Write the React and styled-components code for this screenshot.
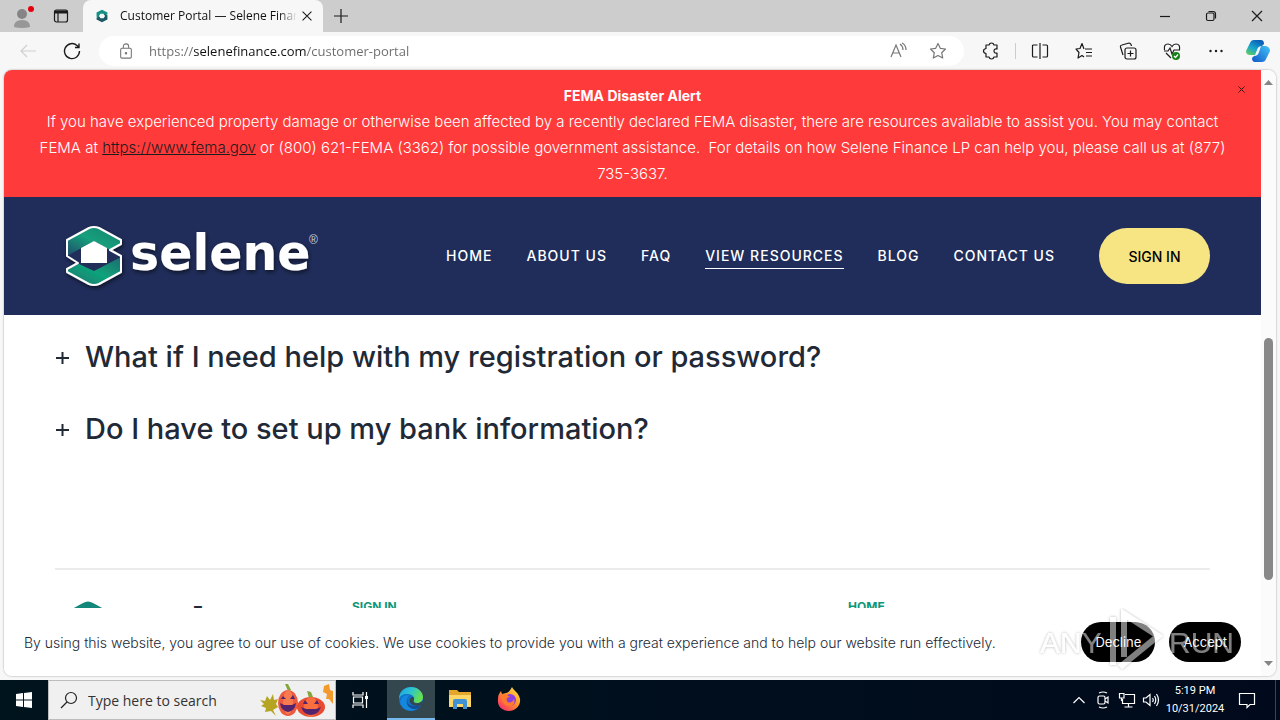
import styled, { createGlobalStyle } from 'styled-components'

const GlobalStyle = createGlobalStyle`
    * {
        box-sizing: border-box;
    }

    body {
        margin: 0;
        font-family: 'Inter', sans-serif;
    }

    button {
        border: none;
        background: none;
        padding: 0;
        font-family: inherit;
        color: inherit;
    }

    p {
        margin: 0;
    }
`

const ui = "'Open Sans', 'Noto Sans', sans-serif"

const Desktop = styled.div`
    display: flex;
    flex-direction: column;
    height: 100vh;
    overflow: hidden;
    background: #f7f7f7;
`

/* Browser */

const TitleBar = styled.div`
    display: flex;
    flex: none;
    height: 32px;
    background: #cdcdcd;
    font-family: ${ui};
`

const IconButton = styled.button`
    flex: none;
    display: flex;
    align-items: center;
    justify-content: center;
    width: ${({ $width }) => $width || 44}px;
    color: ${({ $color }) => $color || '#1b1b1b'};
`

const Tab = styled.div`
    display: flex;
    align-items: center;
    width: 240px;
    margin-left: 6px;
    padding: 0 6px 0 12px;
    background: #f7f7f7;
    border-radius: 8px 8px 0 0;
`

const TabTitle = styled.span`
    flex: 1;
    margin-left: 11px;
    overflow: hidden;
    white-space: nowrap;
    font-size: 12px;
    line-height: 16px;
    color: #111;
    mask-image: linear-gradient(to right, #000 90%, transparent);
`

const WindowButtons = styled.div`
    display: flex;
    margin-left: auto;
`

const Toolbar = styled.div`
    display: flex;
    align-items: center;
    flex: none;
    height: 38px;
    padding: 0 2px 0 6px;
`

const Address = styled.form`
    display: flex;
    align-items: center;
    flex: 1;
    height: 30px;
    margin: 0 5px;
    padding: 0 6px 0 19px;
    background: #fff;
    border-radius: 15px;
    color: #767676;
`

/* the host is darker than the rest of the address */
const Url = styled.input`
    flex: 1;
    margin-left: 15px;
    padding: 0;
    border: none;
    outline: none;
    font-family: ${ui};
    font-size: 13px;
    color: transparent;
    background: linear-gradient(to right, #6b6b6b 45px, #111 45px, #111 157px, #6b6b6b 157px);
    background-clip: text;
`

const Separator = styled.div`
    width: 1px;
    height: 16px;
    margin: 0 2px;
    background: #ccc;
`

const Viewport = styled.div`
    position: relative;
    display: flex;
    flex: 1;
    min-height: 0;
    margin: 0 4px 4px;
    overflow: hidden;
    background: #fff;
    border-radius: 8px;
    box-shadow: 0 0 2px rgba(0, 0, 0, 0.4);
`

const Page = styled.div`
    position: relative;
    flex: 1;
    min-width: 0;
    overflow: hidden;
`

const Scrollbar = styled.div`
    display: flex;
    flex-direction: column;
    align-items: center;
    width: 15px;
    padding: 10px 0;
    background: #fbfbfb;
`

const Space = styled.div`
    flex: ${({ $grow }) => $grow};
`

const Thumb = styled.div`
    flex: 242;
    width: 9px;
    background: #888;
    border-radius: 5px;
`

/* Website */

const Alert = styled.section`
    position: relative;
    padding: 13px 30px 10px;
    background: #ff3a3b;
    color: #fff;
    text-align: center;
    font-size: 15px;
    line-height: 26px;
    font-weight: 300;
`

const AlertTitle = styled.p`
    font-size: 14px;
    font-weight: 700;
`

const AlertLink = styled.a`
    color: #1d1d1d;
`

const AlertClose = styled.button`
    position: absolute;
    top: 15px;
    right: 15px;
    display: flex;
    color: #3a0c0c;
`

const Header = styled.header`
    display: flex;
    align-items: center;
    height: 118px;
    padding: 0 51px;
    background: #202d5a;
    color: #fff;
`

const Nav = styled.nav`
    display: flex;
    gap: 34px;
    margin-left: auto;
    margin-right: 44px;
`

const NavLink = styled.a`
    padding: 2px 0 1px;
    border-bottom: 1px solid ${({ $active }) => ($active ? '#fff' : 'transparent')};
    color: #fff;
    text-decoration: none;
    white-space: nowrap;
    font-size: 14px;
    line-height: 22px;
    font-weight: 500;
    letter-spacing: 1px;
`

const SignIn = styled.button`
    width: 111px;
    height: 56px;
    border-radius: 28px;
    background: #f7e584;
    color: #000;
    font-size: 14px;
    font-weight: 500;
`

const Faq = styled.main`
    padding: 5px 51px 104px;
`

const Question = styled.button`
    display: flex;
    align-items: center;
    gap: 15px;
    width: 100%;
    height: 72px;
    color: #222936;
    text-align: left;
    font-size: 29px;
    font-weight: 500;
`

const Footer = styled.footer`
    display: grid;
    grid-template-columns: 297px 496px 1fr;
    margin: 0 51px;
    padding-top: 29px;
    border-top: 2px solid #ebebeb;
`

const FooterLink = styled.a`
    color: #0d9678;
    text-decoration: none;
    font-size: 12px;
    line-height: 16px;
    font-weight: 700;
`

const Cookies = styled.section`
    position: absolute;
    left: 0;
    right: 0;
    bottom: 0;
    display: flex;
    align-items: center;
    gap: 14px;
    height: 68px;
    padding: 0 20px;
    background: #fff;
    color: #222936;
    font-size: 14px;
    font-weight: 300;
`

const CookieText = styled.p`
    flex: 1;
`

const CookieButton = styled.button`
    height: 40px;
    padding: 0 14px;
    border-radius: 20px;
    background: #000;
    color: #fff;
    font-size: 13px;
`

const Watermark = styled.svg`
    position: absolute;
    right: 40px;
    bottom: 2px;
    pointer-events: none;
`

/* Taskbar */

const Taskbar = styled.div`
    display: flex;
    flex: none;
    height: 40px;
    padding-right: 4px;
    background: linear-gradient(to right, #00141d, #000a1c);
    color: #fff;
    font-family: ${ui};
`

const Search = styled.label`
    display: flex;
    align-items: center;
    width: 288px;
    padding: 0 2px 0 11px;
    background: #f0f0f0;
    border: 1px solid #bdbdbd;
`

const SearchInput = styled.input`
    flex: 1;
    min-width: 0;
    margin-left: 10px;
    padding: 0;
    border: none;
    outline: none;
    background: none;
    font-family: ${ui};
    font-size: 14px;

    &::placeholder {
        color: #333;
    }
`

const Apps = styled.div`
    display: flex;
    margin-left: 3px;
`

const AppButton = styled.button`
    display: flex;
    align-items: center;
    justify-content: center;
    width: 48px;
    margin-right: 1px;
    background: ${({ $active }) => ($active ? '#34464e' : 'none')};
    border-bottom: 2px solid ${({ $active }) => ($active ? '#76b9ed' : 'transparent')};
`

const Tray = styled.div`
    display: flex;
    margin-left: auto;
    padding-right: 8px;
    border-right: 1px solid #3b4450;
`

const Clock = styled.div`
    width: 64px;
    padding-top: 2px;
    text-align: center;
    font-family: 'Roboto', sans-serif;
    font-size: 11px;
    line-height: 18px;
`

const Svg = ({ size = 18, children, ...rest }) => (
    <svg width={size} height={size} viewBox="0 0 18 18" fill="none" stroke="currentColor" strokeWidth="1.2" {...rest}>
        {children}
    </svg>
)

const Favicon = () => (
    <Svg size={14} stroke="none">
        <path d="M9 1 L16 4.5 V7 L12.500 8 L11 6 H7 L5 9 L7 12 L2 10 V4.500Z" fill="#159084" />
        <path d="M9 17 L2 13.500 V11 L5.500 10 L7 12 H11 L13 9 L11 6 L16 8 V13.500Z" fill="#1c5966" />
    </Svg>
)

const mark = 'M34 9 Q39 7 44 9 L66 21 V25 L55 31 L66 37 V53 L44 65 Q39 67 34 65 L12 53 V50 L23 44 L12 37 V21Z'

const Logo = () => (
    <svg width="270" height="74" viewBox="0 0 270 74" role="img" aria-label="Selene">
        <defs>
            <linearGradient id="top" x1="0" y1="1" x2="1" y2="0">
                <stop offset="0.1" stopColor="#1d5a6c" />
                <stop offset="0.5" stopColor="#17a07c" />
                <stop offset="1" stopColor="#17806f" />
            </linearGradient>
            <linearGradient id="bottom" x1="0" y1="1" x2="1" y2="0">
                <stop offset="0" stopColor="#17706f" />
                <stop offset="0.5" stopColor="#10a37b" />
                <stop offset="1" stopColor="#1d6a6c" />
            </linearGradient>
            <filter id="shadow" x="-10%" y="-10%" width="120%" height="130%">
                <feDropShadow dx="1" dy="2" stdDeviation="2" floodColor="#000" floodOpacity="0.6" />
            </filter>
        </defs>
        <g filter="url(#shadow)">
            <path d={mark} fill="#202d5a" />
            <path d="M34 9 Q39 7 44 9 L66 21 V25 L55 31 L39 22 L12 37 V21Z" fill="url(#top)" />
            <path d="M12 51 L24 45 L39 52 L66 38 V53 L44 65 Q39 67 34 65 L12 53Z" fill="url(#bottom)" />
            <path d="M39 22 L52 29 V44 H26 V29Z" fill="#fff" />
            <path d={mark} fill="none" stroke="#fff" strokeWidth="2" strokeLinejoin="round" />
            <text x="75" y="51" fill="#fff" fontFamily="DejaVu Sans" fontWeight="700" fontSize="49">
                selene
            </text>
        </g>
        <text x="254" y="25" fill="#c9cddb" fontFamily="Liberation Sans" fontSize="12">
            ®
        </text>
    </svg>
)

const FooterLogo = () => (
    <svg width="270" height="74" viewBox="0 0 270 74" aria-hidden="true">
        <path d="M28 4 Q33 1 38 4 L60 16 V21 L33 33 L6 21 V16Z" fill="#12877a" />
        <text x="78" y="41" fill="#222936" fontFamily="DejaVu Sans" fontWeight="700" fontSize="45">
            selene
        </text>
    </svg>
)

const Pumpkins = () => (
    <svg width="74" height="36" viewBox="0 0 74 36">
        <path d="M1 18 L6 19 L8 14 L11 18 L14 12 L15 18 L19 17 L17 22 L19 25 L14 28 L17 34 L12 29 L6 30 L7 26 L2 24 L5 22Z" fill="#b5a421" />
        <path d="M65 4 L70 2 L71 8 L74 9 V22 L70 17 L67 17 L68 12 L64 10Z" fill="#f39a2d" />
        <path d="M29 9 L26 2 L29 2 L32 8Z" fill="#84a53a" />
        <ellipse cx="29" cy="21" rx="10" ry="13" fill="#ed5b3e" />
        <ellipse cx="29" cy="20" rx="5" ry="12" fill="#f87b50" />
        <path d="M22 17 L24 14 L27 17Z M31 17 L34 13 L36 17Z" fill="#53246d" />
        <path d="M21 21 L25 23 H33 L37 21 Q36 29 29 30 Q22 29 21 21Z" fill="#53246d" />
        <path d="M50 16 L48 9 L52 10 L54 15Z" fill="#84a53a" />
        <ellipse cx="52" cy="25" rx="14" ry="10" fill="#e94b32" />
        <ellipse cx="52" cy="25" rx="7" ry="10" fill="#f9703e" />
        <path d="M44 22 L46 18 L49 22Z M55 22 L58 18 L60 22Z" fill="#53246d" />
        <path d="M42 25 L47 27 H57 L62 25 Q59 33 52 33 Q45 33 42 25Z" fill="#53246d" />
    </svg>
)

const EdgeIcon = () => (
    <svg width="24" height="24" viewBox="0 0 24 24">
        <defs>
            <linearGradient id="edge" x1="0" y1="0" x2="1" y2="0.4">
                <stop offset="0" stopColor="#1f9fe0" />
                <stop offset="0.5" stopColor="#2bc3d2" />
                <stop offset="1" stopColor="#66e04f" />
            </linearGradient>
        </defs>
        <circle cx="12" cy="12" r="12" fill="#1071c9" />
        <path d="M0 12 C0 4 6 0 12 0 C19 0 24 5 24 10 C24 14 21 16 18 16 C15 16 14 15 15 13 C16 9 12 7 8 7 C4 7 1 9 0 12Z" fill="url(#edge)" />
        <path d="M8 12 C6 17 10 22 17 22 C13 25 5 24 2 18 C0 14 3 8 9 8 C11 8 9 9 8 12Z" fill="#1588de" />
        <path d="M9 11 C6 17 12 21 22 18 C20 21 18 22 16 22 C9 22 6 16 9 11Z" fill="#134f96" />
        <path d="M15 12 C13 15 16 17 20 16 L24 14 L23 18 C15 20 9 17 11 12 C12 10 15 9 15 12Z" fill="#34464e" />
    </svg>
)

const FolderIcon = () => (
    <svg width="22" height="20" viewBox="0 0 22 20">
        <path d="M0 1 H8 L10 3 H22 V18 H0Z" fill="#e5a62c" />
        <path d="M0 6 H22 V18 H0Z" fill="#fcd667" />
        <path d="M4 20 V12 Q4 10 6 10 H16 Q18 10 18 12 V20 H14 V15 H8 V20Z" fill="#3f92d3" />
    </svg>
)

const FirefoxIcon = () => (
    <svg width="24" height="24" viewBox="0 0 24 24">
        <defs>
            <linearGradient id="fire" x1="1" y1="0" x2="0.2" y2="1">
                <stop offset="0" stopColor="#fff04a" />
                <stop offset="0.5" stopColor="#ff9328" />
                <stop offset="1" stopColor="#f7306a" />
            </linearGradient>
        </defs>
        <path d="M15 0 C17 4 22 6 23 12 C24 19 18 24 12 24 C5 24 0 19 1 12 C1 8 2 7 4 4 L5 7 L9 6 C11 6 13 4 15 0Z" fill="url(#fire)" />
        <circle cx="13" cy="13" r="6" fill="#8b3fe0" />
        <path d="M4 8 C8 6 11 8 13 10 C10 10 9 12 10 14 C12 17 16 15 17 12 C19 18 14 20 11 19 C7 18 4 14 4 8Z" fill="#ff7b2c" />
    </svg>
)

const Copilot = () => (
    <svg width="24" height="24" viewBox="0 0 24 24">
        <defs>
            <linearGradient id="copA" x1="0" y1="1" x2="0.6" y2="0">
                <stop offset="0" stopColor="#6fd34a" />
                <stop offset="0.5" stopColor="#18a6cf" />
                <stop offset="1" stopColor="#0b61b8" />
            </linearGradient>
            <linearGradient id="copB" x1="0" y1="1" x2="1" y2="0">
                <stop offset="0" stopColor="#1157c9" />
                <stop offset="1" stopColor="#42c5f7" />
            </linearGradient>
        </defs>
        <path d="M8 1 H15 Q18 1 18 5 L16 7 Q12 7 11 11 L9 16 H4 Q0 16 0 12 L4 4 Q5 1 8 1Z" fill="url(#copA)" />
        <path d="M16 23 H9 Q6 23 6 19 L8 17 Q12 17 13 13 L15 7 H20 Q24 8 24 12 L20 20 Q19 23 16 23Z" fill="url(#copB)" />
    </svg>
)

const Chrome = () => (
    <>
        <TitleBar>
            <IconButton aria-label="Profile">
                <svg width="24" height="26" viewBox="0 0 24 26">
                    <circle cx="12" cy="11" r="5" fill="#858585" />
                    <path d="M4 24 Q4 17 12 17 Q20 17 20 24 Q12 26 4 24Z" fill="#979797" />
                    <circle cx="21" cy="6" r="3" fill="#e3000f" />
                </svg>
            </IconButton>
            <IconButton $width={33} aria-label="Tab actions">
                <Svg size={18}>
                    <rect x="2.500" y="3" width="13" height="12" rx="2" />
                    <path d="M2.500 5 H15.500" strokeWidth="3" />
                    <path d="M6 6 V15" />
                </Svg>
            </IconButton>
            <Tab>
                <Favicon />
                <TabTitle>Customer Portal — Selene Finance</TabTitle>
                <IconButton $width={20} aria-label="Close tab">
                    <Svg size={16}>
                        <path d="M4 4 L14 14 M14 4 L4 14" />
                    </Svg>
                </IconButton>
            </Tab>
            <IconButton $width={36} aria-label="New tab">
                <Svg>
                    <path d="M9 2 V16 M2 9 H16" />
                </Svg>
            </IconButton>
            <WindowButtons>
                <IconButton $width={46} aria-label="Minimize">
                    <Svg>
                        <path d="M4 9.500 H14" />
                    </Svg>
                </IconButton>
                <IconButton $width={46} aria-label="Restore">
                    <Svg>
                        <rect x="4.500" y="6" width="7.500" height="7.500" rx="1.500" />
                        <path d="M6.500 4.500 H11 Q13.500 4.500 13.500 7 V11.500" />
                    </Svg>
                </IconButton>
                <IconButton $width={46} aria-label="Close">
                    <Svg>
                        <path d="M4 4 L14 14 M14 4 L4 14" />
                    </Svg>
                </IconButton>
            </WindowButtons>
        </TitleBar>

        <Toolbar>
            <IconButton $color="#cfcfcf" aria-label="Back">
                <Svg>
                    <path d="M17 9 H2 M8 3 L2 9 L8 15" />
                </Svg>
            </IconButton>
            <IconButton aria-label="Refresh">
                <Svg strokeWidth="1.400">
                    <path d="M16.500 9 A7.500 7.500 0 1 1 14 3.500 L16 5.500 M16 1.500 V5.500 H12" />
                </Svg>
            </IconButton>
            <Address>
                <Svg size={16}>
                    <rect x="3" y="6" width="12" height="11" rx="1.500" />
                    <path d="M6 6 V4 Q6 1 9 1 Q12 1 12 4 V6" />
                    <circle cx="9" cy="11.500" r="0.800" fill="currentColor" />
                </Svg>
                <Url type="text" aria-label="Address" defaultValue="https://selenefinance.com/customer-portal" />
                <IconButton type="button" $width={40} $color="#767676" aria-label="Read aloud">
                    <Svg>
                        <path d="M2 15 L7 3 L12 15 M4 11 H10 M11 2 Q14 4 14 8 M13 1 Q17 3 17 8" />
                    </Svg>
                </IconButton>
                <IconButton type="button" $width={40} $color="#767676" aria-label="Favorite">
                    <Svg>
                        <path d="M9 1.500 L11.300 6.300 L16.500 7 L12.700 10.700 L13.700 16 L9 13.500 L4.300 16 L5.300 10.700 L1.500 7 L6.700 6.300Z" strokeLinejoin="round" />
                    </Svg>
                </IconButton>
            </Address>
            <IconButton aria-label="Extensions">
                <Svg>
                    <path d="M4 3 H7 Q7.500 1 9.500 1 Q11.500 1 12 3 H15 V7 Q12 6.500 12 9 Q12 11.500 15 11 V15 H12 Q11.500 17 9.500 17 Q7.500 17 7 15 H4 V11.500 Q1.500 11 1.500 9 Q1.500 7 4 6.500Z" strokeLinejoin="round" />
                </Svg>
            </IconButton>
            <Separator />
            <IconButton aria-label="Split screen">
                <Svg>
                    <path d="M6.500 3 H2.500 Q1.500 3 1.500 4 V14 Q1.500 15 2.500 15 H6.500 M11.500 3 H15.500 Q16.500 3 16.500 4 V14 Q16.500 15 15.500 15 H11.500 M9 1 V17" />
                </Svg>
            </IconButton>
            <IconButton aria-label="Favorites">
                <Svg>
                    <path d="M9 7 L7 1.500 L5 6.500 L1 7 L4 10.500 L3 16 L7 13.500 L9 15 M10 7 H17 M11 10.500 H17 M11 14 H17" strokeLinejoin="round" />
                </Svg>
            </IconButton>
            <IconButton aria-label="Collections">
                <Svg>
                    <rect x="6" y="6" width="11" height="11" rx="2" />
                    <path d="M11.500 8.500 V14.500 M8.500 11.500 H14.500 M4 13 L1.500 5 Q1 3.500 3 3 L10 1 Q12 1 12.500 4" />
                </Svg>
            </IconButton>
            <IconButton aria-label="Browser essentials">
                <Svg>
                    <path d="M1.500 8 Q0.500 2 5 2 Q7.500 2 9 4.500 Q10.500 2 13 2 Q17.500 2 16.500 8 M1 9 H5 L7 6 L9 12 L11 8 H17 M3 11 L8 16" />
                    <circle cx="13" cy="14" r="4" fill="#168018" stroke="none" />
                    <path d="M11 14 L12.500 15.500 L15 12.500" stroke="#fff" />
                </Svg>
            </IconButton>
            <IconButton aria-label="Settings and more">
                <Svg fill="currentColor" stroke="none">
                    <circle cx="3.500" cy="9" r="1.200" />
                    <circle cx="9" cy="9" r="1.200" />
                    <circle cx="14.500" cy="9" r="1.200" />
                </Svg>
            </IconButton>
            <IconButton $width={40} aria-label="Copilot">
                <Copilot />
            </IconButton>
        </Toolbar>
    </>
)

const links = ['HOME', 'ABOUT US', 'FAQ', 'VIEW RESOURCES', 'BLOG', 'CONTACT US']

const questions = ['What if I need help with my registration or password?', 'Do I have to set up my bank information?']

const Website = () => (
    <Page>
        <Alert>
            <AlertTitle>FEMA Disaster Alert</AlertTitle>
            <p>
                If you have experienced property damage or otherwise been affected by a recently declared FEMA disaster, there are resources
                available to assist you. You may contact FEMA at <AlertLink href="https://www.fema.gov">https://www.fema.gov</AlertLink> or
                (800) 621-FEMA (3362) for possible government assistance.&nbsp; For details on how Selene Finance LP can help you, please
                call us at (877) 735-3637.
            </p>
            <AlertClose aria-label="Close alert">
                <Svg size={9}>
                    <path d="M3 3 L15 15 M15 3 L3 15" strokeWidth="2" />
                </Svg>
            </AlertClose>
        </Alert>

        <Header>
            <Logo />
            <Nav>
                {links.map((link) => (
                    <NavLink key={link} href="#" $active={link === 'VIEW RESOURCES'}>
                        {link}
                    </NavLink>
                ))}
            </Nav>
            <SignIn>SIGN IN</SignIn>
        </Header>

        <Faq>
            {questions.map((question) => (
                <Question key={question}>
                    <Svg size={15} viewBox="0 0 15 15">
                        <path d="M7.500 3 V15 M1 9 H14" strokeWidth="2" />
                    </Svg>
                    {question}
                </Question>
            ))}
        </Faq>

        <Footer>
            <FooterLogo />
            <FooterLink href="#">SIGN IN</FooterLink>
            <FooterLink href="#">HOME</FooterLink>
        </Footer>

        <Cookies>
            <CookieText>
                By using this website, you agree to our use of cookies. We use cookies to provide you with a great experience and to help our
                website run effectively.
            </CookieText>
            <CookieButton>Decline</CookieButton>
            <CookieButton>Accept</CookieButton>
        </Cookies>
    </Page>
)

const AnyRun = () => (
    <Watermark width="200" height="66" viewBox="0 0 200 66">
        <defs>
            <filter id="glow" x="-10%" y="-10%" width="120%" height="120%">
                <feDropShadow dx="0" dy="0" stdDeviation="1.5" floodColor="#000" floodOpacity="0.6" />
            </filter>
        </defs>
        <g filter="url(#glow)" opacity="0.5" fill="#fff" fontFamily="Liberation Sans" fontSize="30">
            <text x="4" y="45">
                ANY
            </text>
            <path d="M77 9 V57 M88 49 V6 L122 28 L84 59" fill="none" stroke="#fff" strokeWidth="6" />
            <text x="133" y="45">
                RUN
            </text>
        </g>
    </Watermark>
)

const WindowsTaskbar = () => (
    <Taskbar>
        <IconButton $width={48} $color="#fff" aria-label="Start">
            <svg width="16" height="16" viewBox="0 0 16 16" fill="#fff">
                <path d="M0 2 L7 1 V7.500 H0Z M8 1 L16 0 V7.500 H8Z M0 8.500 H7 V15 L0 14Z M8 8.500 H16 V16 L8 15Z" />
            </svg>
        </IconButton>
        <Search>
            <Svg stroke="#222">
                <circle cx="11" cy="7" r="5.500" />
                <path d="M7 11 L1 17" />
            </Svg>
            <SearchInput type="text" placeholder="Type here to search" aria-label="Type here to search" />
            <Pumpkins />
        </Search>
        <IconButton $width={48} $color="#fff" aria-label="Task view">
            <Svg>
                <path d="M2 1 V4 H12 V1 M2 17 V14 H12 V17 M2.500 6 H11.500 V12 H2.500Z M15.500 1 V17" />
                <path d="M15.500 5 V8" strokeWidth="3" />
            </Svg>
        </IconButton>
        <Apps>
            <AppButton $active aria-label="Microsoft Edge">
                <EdgeIcon />
            </AppButton>
            <AppButton aria-label="File Explorer">
                <FolderIcon />
            </AppButton>
            <AppButton aria-label="Firefox">
                <FirefoxIcon />
            </AppButton>
        </Apps>
        <Tray>
            <IconButton $width={24} $color="#fff" aria-label="Show hidden icons">
                <Svg>
                    <path d="M3.500 12 L9 6.500 L14.500 12" />
                </Svg>
            </IconButton>
            <IconButton $width={24} $color="#fff" aria-label="Camera">
                <Svg>
                    <rect x="4" y="5" width="7" height="8" rx="1.500" />
                    <path d="M11 8 L14 6 V12 L11 10 M5 2 Q9 0 13 2 M5 16 Q9 18 13 16" />
                </Svg>
            </IconButton>
            <IconButton $width={24} $color="#fff" aria-label="Network">
                <Svg>
                    <path d="M7 3.500 H16.500 V12.500 H4.500 V8 M10.500 12.500 V16 M6.500 16 H14.500 M1.500 2.500 H6 V7 H1.500Z M3.500 7 V10" />
                </Svg>
            </IconButton>
            <IconButton $width={24} $color="#fff" aria-label="Volume">
                <Svg>
                    <path d="M1.500 7 H4 L8 3.500 V14.500 L4 11 H1.500Z M10.500 7 Q12 9 10.500 11 M12.500 5 Q15 9 12.500 13 M14.500 3 Q18.500 9 14.500 15" />
                </Svg>
            </IconButton>
            <Clock>
                5:19 PM
                <br />
                10/31/2024
            </Clock>
            <IconButton $width={40} $color="#fff" aria-label="Notifications">
                <Svg>
                    <path d="M1.500 2.500 H16.500 V13.500 H12 L9 16.500 V13.500 H1.500Z" />
                </Svg>
            </IconButton>
        </Tray>
    </Taskbar>
)

const App = () => {
    return (
        <Desktop>
            <GlobalStyle />
            <Chrome />
            <Viewport>
                <Website />
                <Scrollbar>
                    <svg width="9" height="5" viewBox="0 0 9 5">
                        <path d="M0 5 L4.500 0 L9 5Z" fill="#858585" />
                    </svg>
                    <Space $grow={253} />
                    <Thumb />
                    <Space $grow={81} />
                    <svg width="9" height="5" viewBox="0 0 9 5">
                        <path d="M0 0 L4.500 5 L9 0Z" fill="#858585" />
                    </svg>
                </Scrollbar>
                <AnyRun />
            </Viewport>
            <WindowsTaskbar />
        </Desktop>
    )
}

export default App
